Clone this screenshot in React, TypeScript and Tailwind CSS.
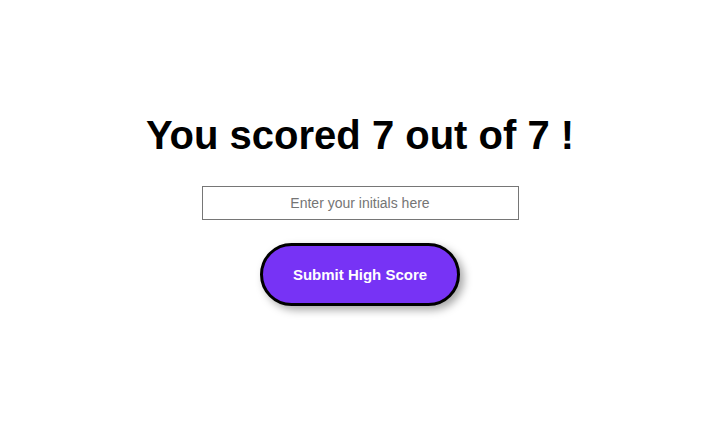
export default function App() {
  return (
    <div className="min-h-[443px] w-full bg-white flex flex-col items-center pt-[112px] pr-2 font-['Liberation_Sans',Arial,sans-serif]">
      <h1 className="text-[40px] leading-[46px] font-bold text-black">You scored 7 out of 7 !</h1>
      <input
        type="text"
        placeholder="Enter your initials here"
        className="mt-[28px] w-[317px] h-[34px] border border-[#767676] text-center text-[14px] text-black placeholder:text-[#757575] outline-none"
      />
      <button className="mt-[23px] w-[200px] h-[63px] rounded-full border-[3px] border-black bg-[#7733f5] pt-[2px] text-white text-[15px] font-bold shadow-[4px_4px_8px_rgba(0,0,0,0.35)]">
        Submit High Score
      </button>
    </div>
  )
}
